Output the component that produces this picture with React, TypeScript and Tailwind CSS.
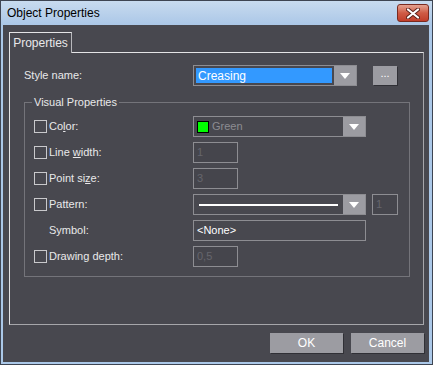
import React from "react";

const font = "font-['Liberation_Sans',Arial,sans-serif]";

function Check() {
  return <span className="block h-[13px] w-[13px] shrink-0 border border-[#c9c9cc]" />;
}

function DropButton() {
  return (
    <span className="flex h-full w-[22px] shrink-0 items-center justify-center bg-[#9c9ca2]">
      <svg width="10" height="6" viewBox="0 0 10 6">
        <path d="M0 0h10L5 6z" fill="#ffffff" />
      </svg>
    </span>
  );
}

function SmallBox({ value, width = "w-[45px]" }: { value: string; width?: string }) {
  return (
    <div className={`flex h-[21px] ${width} items-center border border-[#8d8d92] bg-[#45454c] px-[3px] text-[#65656c]`}>
      {value}
    </div>
  );
}

function Row({ label, check = true, children }: { label: React.ReactNode; check?: boolean; children: React.ReactNode }) {
  return (
    <div className="flex h-[21px] items-center">
      <div className="flex w-[159px] items-center">
        {check ? <Check /> : <span className="w-[13px]" />}
        <span className="ml-[2px]">{label}</span>
      </div>
      {children}
    </div>
  );
}

export default function App() {
  return (
    <div className={`${font} flex h-[365px] w-[433px] flex-col border border-[#3e4552] bg-[#abc8e8] text-[11px] leading-none`}>
      <div className="flex h-[24px] items-center bg-gradient-to-b from-[#c8dbef] to-[#abc7e7] pl-[6px] pr-[3px]">
        <span className="text-[12px] text-black">Object Properties</span>
        <button className="ml-auto flex h-[18px] w-[32px] items-center justify-center rounded-[3px] border border-[#7a2a20] bg-gradient-to-b from-[#e3a190] via-[#cf5b45] to-[#c13d2a]">
          <svg width="14" height="11" viewBox="0 0 14 11">
            <path d="M2 1.5L12 9.5M12 1.5L2 9.5" stroke="#5a1f18" strokeWidth="4" strokeLinecap="round" />
            <path d="M2 1.5L12 9.5M12 1.5L2 9.5" stroke="#ffffff" strokeWidth="2.2" strokeLinecap="round" />
          </svg>
        </button>
      </div>

      <div className="mb-[2px] ml-[2px] mr-[3px] flex flex-1 flex-col bg-[#48484f] pl-[6px] pt-[7px] text-[#e8e8ea]">
        <div className="relative z-10 -mb-px flex h-[21px] w-[63px] items-center justify-center border-l border-r border-t border-l-[#e4e4e6] border-r-[#b8b8bc] border-t-[#e4e4e6] bg-[#48484f] text-[12px]">
          Properties
        </div>
        <div className="h-[273px] w-[415px] border border-b-[#a6a6aa] border-l-[#e4e4e6] border-r-[#a6a6aa] border-t-[#e4e4e6] pl-[14px] pt-[12px]">
          <div className="flex h-[21px] items-center">
            <span className="w-[169px]">Style name:</span>
            <div className="flex h-[21px] w-[164px] border border-[#8d8d92] bg-[#48484f]">
              <div className="m-[2px] flex flex-1 items-center bg-[#3399ff] px-[2px] text-[12px] text-white">Creasing</div>
              <DropButton />
            </div>
            <button className="ml-[16px] h-[19px] w-[24px] bg-[#9c9ca2] pb-[4px] text-white shadow-[1px_1px_0_#303036]">...</button>
          </div>

          <fieldset className="mt-[11px] w-[386px] border border-[#74747a] pb-[9px] pl-[9px]">
            <legend className="-ml-[2px] px-[2px]">Visual Properties</legend>
            <div className="mt-[8px] flex flex-col gap-[5px]">
              <Row label={<>Co<u>l</u>or:</>}>
                <div className="flex h-[21px] w-[173px] border border-[#8d8d92]">
                  <div className="flex flex-1 items-center gap-[3px] pl-[3px] text-[#8c8c92]">
                    <span className="h-[12px] w-[12px] border border-black bg-[#00ff00]" />
                    Green
                  </div>
                  <DropButton />
                </div>
              </Row>
              <Row label={<>Line <u>w</u>idth:</>}>
                <SmallBox value="1" />
              </Row>
              <Row label={<>Point si<u>z</u>e:</>}>
                <SmallBox value="3" />
              </Row>
              <Row label="Pattern:">
                <div className="flex h-[21px] w-[173px] border border-[#8d8d92]">
                  <div className="flex flex-1 items-center px-[5px]">
                    <span className="h-[2px] w-full bg-white" />
                  </div>
                  <DropButton />
                </div>
                <div className="ml-[6px]">
                  <SmallBox value="1" width="w-[26px]" />
                </div>
              </Row>
              <Row label="Symbol:" check={false}>
                <div className="flex h-[21px] w-[173px] items-center border border-[#8d8d92] px-[3px] text-white">&lt;None&gt;</div>
              </Row>
              <Row label="Drawing depth:">
                <SmallBox value="0,5" />
              </Row>
            </div>
          </fieldset>
        </div>

        <div className="mr-[5px] mt-[8px] flex justify-end gap-[8px]">
          <button className="h-[20px] w-[73px] bg-[#9c9ca2] text-[12px] text-white shadow-[1px_1px_0_#303036]">OK</button>
          <button className="h-[20px] w-[73px] bg-[#9c9ca2] text-[12px] text-white shadow-[1px_1px_0_#303036]">Cancel</button>
        </div>
      </div>
    </div>
  );
}
